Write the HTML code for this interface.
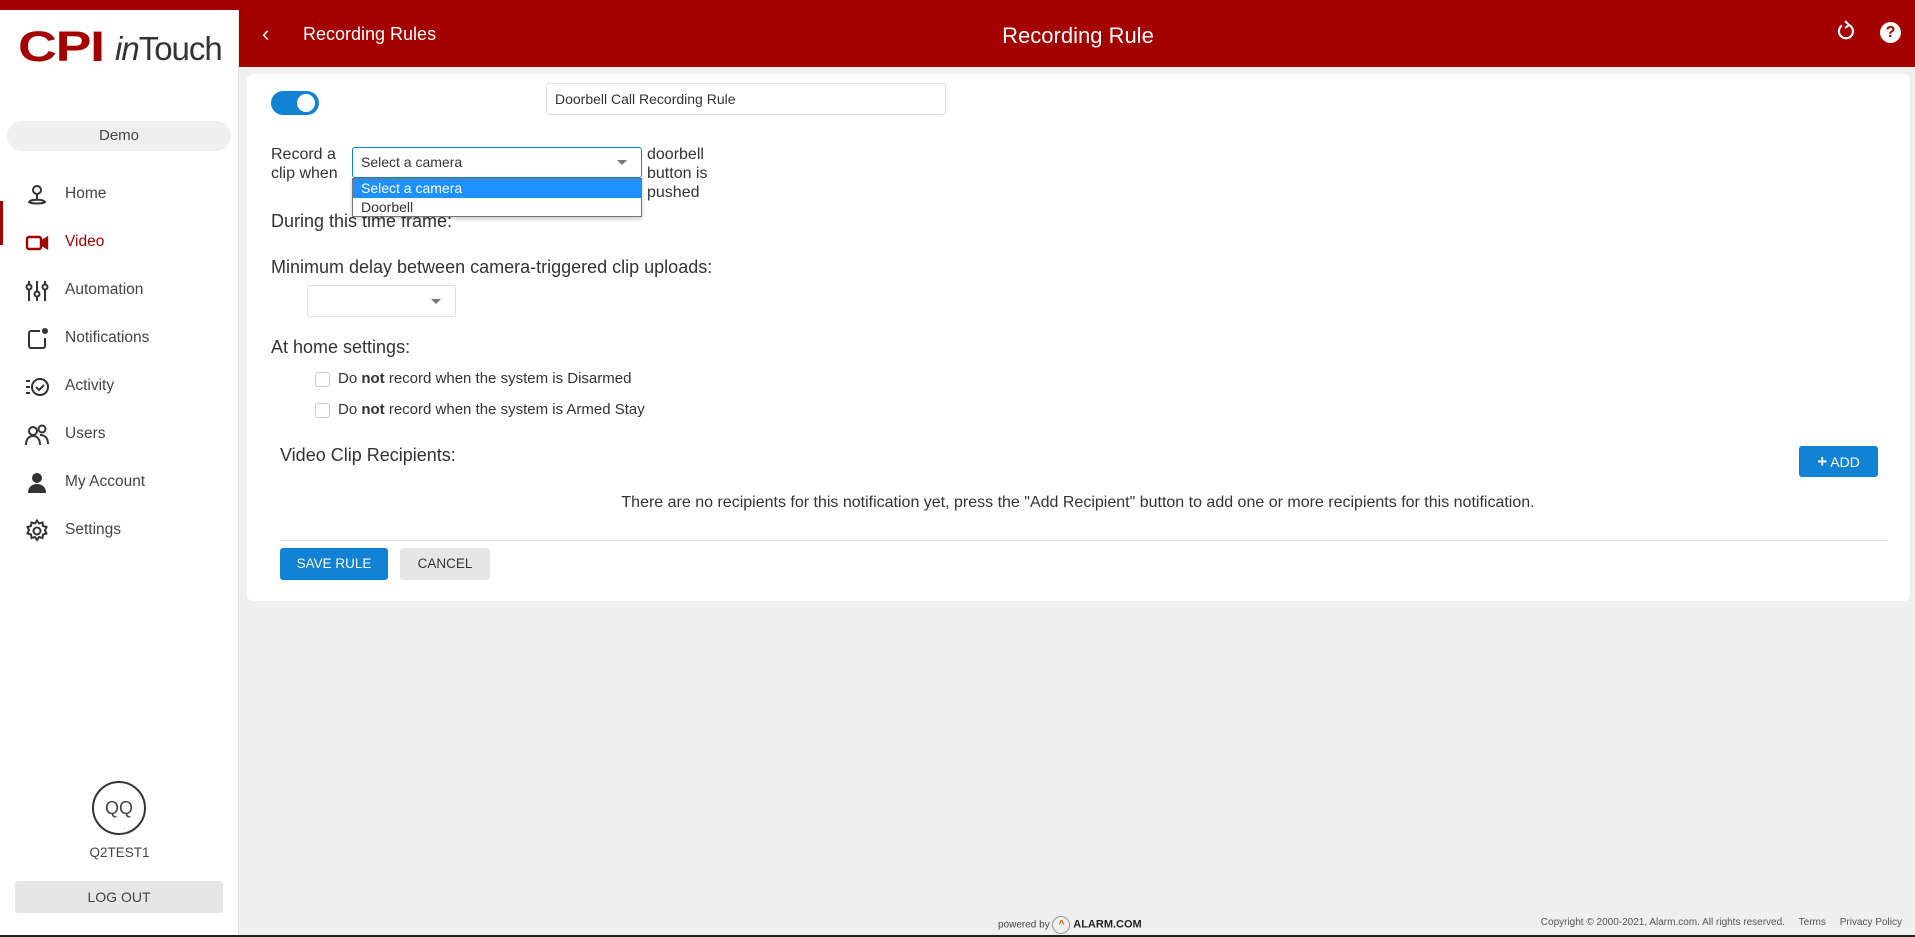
<!DOCTYPE html>
<html><head><meta charset="utf-8"><style>
*{box-sizing:border-box;margin:0;padding:0}
body{width:1915px;height:937px;overflow:hidden;background:#efefef;font-family:"Liberation Sans",Arial,sans-serif;color:#333;position:relative}
.abs{position:absolute}
#top{left:0;top:0;width:1915px;height:67px;background:#a50000}
#side{left:0;top:0;width:239px;height:935px;background:#fff;border-right:1px solid #e4e4e4}
.nav{position:absolute;left:65px;font-size:15.5px;color:#444}
.ic{position:absolute;left:25px;width:24px;height:24px}
#card{left:247px;top:74px;width:1663px;height:527px;background:#fff;border-radius:6px}
.t{position:absolute;white-space:nowrap}
.cb{position:absolute;width:15px;height:15px;border:1px solid #ccc;border-radius:3px;background:#fff}
</style></head><body>
<div id="top" class="abs"></div>
<div class="t" style="left:262px;top:21px;color:#fff;font-size:22px">&#8249;</div>
<div class="t" style="left:303px;top:24px;color:#fff;font-size:18px">Recording Rules</div>
<div class="t" style="left:0;width:2156px;top:23px;text-align:center;color:#fff;font-size:22px">Recording Rule</div>
<svg class="abs" style="left:1835px;top:20px" width="22" height="22" viewBox="0 0 22 22"><path d="M7 5.5A7 7 0 1 0 14 5" fill="none" stroke="#fff" stroke-width="2.2"/><path d="M10 1l4 4-4 3" fill="none" stroke="#fff" stroke-width="2"/></svg>
<div class="abs" style="left:1880px;top:22px;width:21px;height:21px;border-radius:50%;background:#fff;color:#a50000;font-weight:bold;font-size:16px;text-align:center;line-height:21px">?</div>

<div id="side" class="abs">
<div class="abs" style="left:0;top:0;width:239px;height:10px;background:#a50000"></div>
<div class="t" style="left:18px;top:26px;font-weight:bold;font-size:43px;line-height:43px;color:#a50000;letter-spacing:-1px;transform:scaleX(1.25);transform-origin:left">CPI</div>
<div class="t" style="left:115px;top:30px;font-size:33px;color:#333;letter-spacing:-1px"><i>in</i>Touch</div>
<div class="abs" style="left:7px;top:121px;width:224px;height:30px;border-radius:15px;background:#efefef;text-align:center;line-height:30px;font-size:15px;color:#444">Demo</div>
<div class="abs" style="left:0;top:201px;width:3px;height:44px;background:#a50000"></div>
<svg class="ic" style="top:183px" viewBox="0 0 24 24" fill="none" stroke="#333" stroke-width="2"><circle cx="12" cy="7" r="4"/><path d="M12 11v6M4 19c2-3 14-3 16 0-2 2-14 2-16 0z"/></svg><div class="nav" style="top:185px">Home</div>
<svg class="ic" style="top:231px" viewBox="0 0 24 24" fill="none" stroke="#a50000" stroke-width="2.4"><rect x="2" y="6" width="14" height="12" rx="2"/><path d="M17 10l5-3v10l-5-3z" fill="#a50000"/></svg><div class="nav" style="top:233px;color:#a50000">Video</div>
<svg class="ic" style="top:279px" viewBox="0 0 24 24" fill="none" stroke="#333" stroke-width="2"><path d="M4 2v20M12 2v20M20 2v20"/><circle cx="4" cy="8" r="2.5" fill="#fff"/><circle cx="12" cy="15" r="2.5" fill="#fff"/><circle cx="20" cy="8" r="2.5" fill="#fff"/></svg><div class="nav" style="top:281px">Automation</div>
<svg class="ic" style="top:327px" viewBox="0 0 24 24" fill="none" stroke="#333" stroke-width="2"><path d="M15 4H6a2 2 0 0 0-2 2v13a2 2 0 0 0 2 2h12a2 2 0 0 0 2-2v-8"/><circle cx="20" cy="4" r="3" fill="#333" stroke="none"/></svg><div class="nav" style="top:329px">Notifications</div>
<svg class="ic" style="top:375px" viewBox="0 0 24 24" fill="none" stroke="#333" stroke-width="2"><path d="M1 6h4M1 12h4M1 18h4"/><circle cx="15" cy="12" r="8"/><path d="M11 12l3 3 5-5"/></svg><div class="nav" style="top:377px">Activity</div>
<svg class="ic" style="top:423px" viewBox="0 0 24 24" fill="none" stroke="#333" stroke-width="2"><circle cx="8" cy="8" r="4"/><circle cx="17" cy="6" r="3.5"/><path d="M1 22c0-6 3-9 7-9s7 3 7 9M15 12c5 0 8 3 8 9"/></svg><div class="nav" style="top:425px">Users</div>
<svg class="ic" style="top:471px" viewBox="0 0 24 24" fill="#333"><circle cx="12" cy="7" r="5"/><path d="M3 22c0-6 4-9 9-9s9 3 9 9z"/></svg><div class="nav" style="top:473px">My Account</div>
<svg class="ic" style="top:519px" viewBox="0 0 24 24" fill="none" stroke="#333" stroke-width="2"><circle cx="12" cy="12" r="3.5"/><path d="M12 1.5l2 3 3.5-1 .5 3.5 3.5 1-1.5 3.5 1.5 3-3.5 1-.5 3.5-3.5-1-2 3-2-3-3.5 1-.5-3.5-3.5-1 1.5-3.5-1.5-3 3.5-1 .5-3.5 3.5 1z"/></svg><div class="nav" style="top:521px">Settings</div>
<div class="abs" style="left:92px;top:781px;width:54px;height:54px;border:2px solid #333;border-radius:50%;text-align:center;line-height:50px;font-size:18px;color:#444">QQ</div>
<div class="t" style="left:0;width:239px;text-align:center;top:845px;font-size:13.5px;color:#444">Q2TEST1</div>
<div class="abs" style="left:15px;top:881px;width:208px;height:32px;background:#e6e6e6;border-radius:3px;text-align:center;line-height:32px;font-size:14px;color:#444">LOG OUT</div>
</div>

<div id="card" class="abs"></div>
<div class="abs" style="left:271px;top:91px;width:48px;height:24px;border-radius:12px;background:#1283d4"><div class="abs" style="left:26px;top:3px;width:18px;height:18px;border-radius:50%;background:#fff"></div></div>
<div class="abs" style="left:546px;top:83px;width:400px;height:32px;border:1px solid #ddd;border-radius:3px;font-size:14px;line-height:30px;padding-left:8px;color:#333">Doorbell Call Recording Rule</div>
<div class="t" style="left:271px;top:145px;font-size:16px;line-height:19px">Record a<br>clip when</div>
<div class="abs" style="left:352px;top:147px;width:290px;height:31px;border:1px solid #1283d4;border-radius:3px;font-size:14px;line-height:29px;padding-left:8px">Select a camera<span class="abs" style="right:14px;top:12px;border:5px solid transparent;border-top-color:#777"></span></div>
<div class="abs" style="left:352px;top:178px;width:290px;height:39px;border:1px solid #777;background:#fff;font-size:14px;box-shadow:0 2px 4px rgba(0,0,0,.2);z-index:2"><div style="background:#1e90ff;color:#fff;height:19px;line-height:19px;padding-left:8px">Select a camera</div><div style="height:18px;line-height:18px;padding-left:8px">Doorbell</div></div>
<div class="t" style="left:647px;top:145px;font-size:16px;line-height:19px">doorbell<br>button is<br>pushed</div>
<div class="t" style="left:271px;top:211px;font-size:18px">During this time frame:</div>
<div class="t" style="left:271px;top:257px;font-size:18px">Minimum delay between camera-triggered clip uploads:</div>
<div class="abs" style="left:307px;top:285px;width:149px;height:32px;border:1px solid #ddd;border-radius:3px"><span class="abs" style="right:14px;top:13px;border:5px solid transparent;border-top-color:#777"></span></div>
<div class="t" style="left:271px;top:337px;font-size:18px">At home settings:</div>
<div class="cb" style="left:315px;top:372px"></div><div class="t" style="left:338px;top:370px;font-size:15px">Do <b>not</b> record when the system is Disarmed</div>
<div class="cb" style="left:315px;top:403px"></div><div class="t" style="left:338px;top:401px;font-size:15px">Do <b>not</b> record when the system is Armed Stay</div>
<div class="t" style="left:280px;top:445px;font-size:18px">Video Clip Recipients:</div>
<div class="abs" style="left:1799px;top:446px;width:79px;height:31px;background:#1283d4;border-radius:3px;color:#fff;font-size:14px;text-align:center;line-height:31px"><b style="font-size:17px">+</b> ADD</div>
<div class="t" style="left:0;width:2156px;text-align:center;top:494px;font-size:16px">There are no recipients for this notification yet, press the "Add Recipient" button to add one or more recipients for this notification.</div>
<div class="abs" style="left:280px;top:540px;width:1607px;height:1px;background:#e4e4e4"></div>
<div class="abs" style="left:280px;top:548px;width:108px;height:32px;background:#1283d4;border-radius:3px;color:#fff;font-size:13.5px;text-align:center;line-height:32px">SAVE RULE</div>
<div class="abs" style="left:400px;top:548px;width:90px;height:32px;background:#e6e6e6;border-radius:3px;color:#333;font-size:13.5px;text-align:center;line-height:32px">CANCEL</div>

<div class="t" style="left:998px;top:916px;font-size:10px;color:#444">powered by <span style="display:inline-block;width:18px;height:18px;border:1px solid #999;border-radius:50%;text-align:center;line-height:16px;color:#e05a00;font-weight:bold;vertical-align:middle">^</span> <b style="font-size:11px;color:#222">ALARM.COM</b></div>
<div class="t" style="right:13px;top:917px;font-size:10px;color:#555">Copyright © 2000-2021, Alarm.com. All rights reserved. &nbsp;&nbsp;&nbsp; Terms &nbsp;&nbsp;&nbsp; Privacy Policy</div>
<div class="abs" style="left:0;top:935px;width:1915px;height:2px;background:#222"></div>
</body></html>
